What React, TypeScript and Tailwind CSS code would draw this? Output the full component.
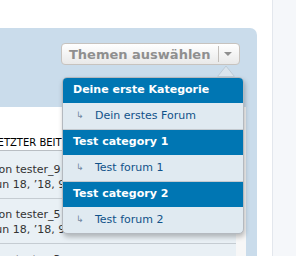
const sections = [
  { category: "Deine erste Kategorie", forum: "Dein erstes Forum" },
  { category: "Test category 1", forum: "Test forum 1" },
  { category: "Test category 2", forum: "Test forum 2" },
];

const rows = [
  { by: "von tester_9", date: "Jun 18, ’18, 9:14", first: true },
  { by: "von tester_5", date: "Jun 18, ’18, 9:02", first: false },
  { by: "von tester_3", date: "Jun 18, ’18, 8:55", first: false },
];

function ForumDropdown() {
  return (
    <div className="absolute left-[1px] top-[22px] w-[182px]">
      <svg width="18" height="12" viewBox="0 0 18 12" className="ml-[155px] block">
        <polygon points="0.5,11.5 9,1 17.5,11.5" fill="#dae4ed" stroke="#bccad6" strokeWidth="1" />
      </svg>
      <div className="rounded-[5px] border border-[#b4b9bf] bg-[#e0eaf1] shadow-[1px_3px_5px_rgba(0,0,0,0.25)] overflow-hidden">
        {sections.map((s, i) => (
          <div key={s.category}>
            <div
              className={`flex items-center pl-[10px] bg-[#0076b3] text-white font-bold text-[11px] ${
                i > 0 ? "border-t border-[#c3c9cf] h-[26px]" : "h-[25px]"
              }`}
            >
              {s.category}
            </div>
            <div className="h-[26px] flex items-center pl-[13px] text-[11px] text-[#105289]">
              <span className="w-[19px] shrink-0 text-[9px] text-[#6f86a0]">↳</span>
              <span>{s.forum}</span>
            </div>
          </div>
        ))}
      </div>
    </div>
  );
}

export default function App() {
  return (
    <div
      className="w-[296px] h-[256px] overflow-hidden bg-white flex"
      style={{ fontFamily: '"DejaVu Sans", Verdana, sans-serif' }}
    >
      <div className="w-[272px] shrink-0 pt-[28px]">
        <div className="w-[257px] h-[228px] bg-[#cadceb] rounded-tr-[7px] flex flex-col">
          <div className="h-[79px] shrink-0 flex justify-end pt-[15px] pr-[17px]">
            <div className="relative h-[22px] w-[179px]">
              <div className="h-[22px] w-[179px] flex items-center rounded-[4px] border border-[#c7c3bf] bg-gradient-to-b from-white to-[#e9e9e9]">
                <span className="pl-[7px] w-[157px] text-[13px] font-bold text-[#8f8f8f] leading-none">
                  Themen auswählen
                </span>
                <span className="h-[16px] w-px bg-[#c2beba]" />
                <svg width="20" height="8" viewBox="0 0 20 8">
                  <polygon points="5,2 13,2 9,6" fill="#8f8f8f" />
                </svg>
              </div>
              <ForumDropdown />
            </div>
          </div>
          <div className="flex-1 mr-[11px] bg-[#f7f7f7] flex flex-col">
            <div className="mr-[10px] bg-white h-[44px] shrink-0 flex items-end pb-[1px] border-b border-[#b9bec3]">
              <span className="ml-[-8px] text-[10px] leading-[12px] text-black uppercase">Letzter Beitrag</span>
            </div>
            {rows.map((r) => (
              <div
                key={r.by}
                className={`mr-[10px] shrink-0 bg-[#e9f0f5] border-b border-[#c5ccd2] flex flex-col text-[11px] leading-[15px] text-[#333333] ${
                  r.first ? "h-[48px] pt-[11px]" : "h-[45px] pt-[8px]"
                }`}
              >
                <span className="ml-[-8px] whitespace-nowrap">{r.by}</span>
                <span className="ml-[-8px] whitespace-nowrap">{r.date}</span>
              </div>
            ))}
          </div>
        </div>
      </div>
      <div className="flex-1 border-l border-[#e3e7ed] bg-[#f5f7fa]" />
    </div>
  );
}
